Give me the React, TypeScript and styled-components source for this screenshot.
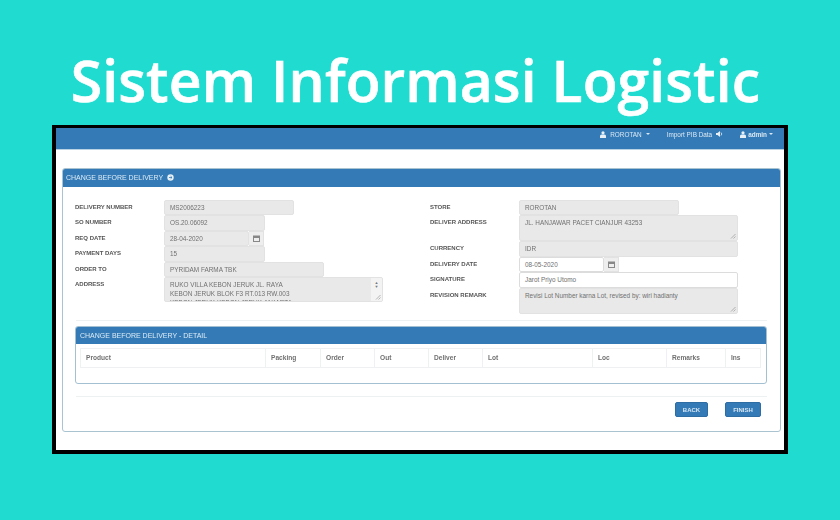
import styled, { createGlobalStyle } from "styled-components";

const Global = createGlobalStyle`
  html, body { margin: 0; padding: 0; }
  body { width: 840px; height: 520px; overflow: hidden; background: #20dcd0; font-family: "Liberation Sans", Arial, sans-serif; }
`;

const Page = styled.div`
  width: 840px;
  height: 520px;
  box-sizing: border-box;
  padding-top: 46px;
  display: flex;
  flex-direction: column;
  align-items: center;
  background: #20dcd0;
`;

const Heading = styled.h1`
  margin: 0 9px 11px 0;
  height: 68px;
  line-height: 68px;
  font-family: "Open Sans", sans-serif;
  font-size: 57px;
  font-weight: 600;
  letter-spacing: 0.1px;
  -webkit-text-stroke: 0.6px #fff;
  color: #fff;
  white-space: nowrap;
`;

const Frame = styled.div`
  width: 736px;
  height: 329px;
  box-sizing: border-box;
  border: 4px solid #000;
  border-top-width: 3px;
  background: #fff;
  overflow: hidden;
`;

const Shot = styled.div`
  height: 100%;
  filter: blur(0.5px);
`;

const NavBar = styled.div`
  height: 22px;
  background: #337ab7;
  border-bottom: 1px solid #b9d3e4;
  box-sizing: border-box;
  display: flex;
  justify-content: flex-end;
  align-items: center;
  padding: 0 11px 9px 0;
  font-size: 6.4px;
  color: #dbe8f2;
`;

const NavItem = styled.span<{ $bold?: boolean; $gap?: number }>`
  display: flex;
  align-items: center;
  gap: ${p => (p.$bold ? 2 : 4)}px;
  margin-left: ${p => p.$gap ?? 18}px;
  font-weight: ${p => (p.$bold ? 700 : 400)};
`;

const Caret = styled.i`
  width: 0;
  height: 0;
  border: 2px solid transparent;
  border-top-color: #dbe8f2;
  border-bottom-width: 0;
`;

const Panel = styled.section`
  margin: 18px 3px 0 6px;
  height: 264px;
  box-sizing: border-box;
  border: 1px solid #a9c4d0;
  border-radius: 3px;
  background: #fff;
`;

const PanelHead = styled.div<{ $h: number; $pad: number }>`
  height: ${p => p.$h}px;
  box-sizing: border-box;
  background: #337ab7;
  border-radius: 2px 2px 0 0;
  display: flex;
  align-items: center;
  gap: 4px;
  padding: 0 0 1px ${p => p.$pad}px;
  font-size: 7px;
  color: #dcebf5;
  white-space: nowrap;
`;

const FormArea = styled.div`
  display: flex;
  padding: 13px 0 0 12px;
  height: 133px;
  box-sizing: border-box;
`;

const Column = styled.div<{ $w: number }>`
  width: ${p => p.$w}px;
  display: flex;
  flex-direction: column;
`;

const Row = styled.div<{ $h?: number }>`
  display: flex;
  flex: none;
  height: ${p => p.$h ?? 15.4}px;
`;

const Label = styled.div`
  width: 89px;
  flex: none;
  font-size: 6px;
  font-weight: 700;
  color: #555;
  line-height: 15px;
  white-space: nowrap;
`;

const Field = styled.div<{ $w: number; $white?: boolean; $tall?: boolean }>`
  position: relative;
  width: ${p => p.$w}px;
  height: 100%;
  box-sizing: border-box;
  padding: ${p => (p.$tall ? "2px" : "0")} 5px 0;
  background: ${p => (p.$white ? "#fff" : "#e9e9e9")};
  border: 1px solid ${p => (p.$white ? "#dcdcdc" : "#e2e2e2")};
  border-radius: 2px;
  font-size: 6.4px;
  line-height: ${p => (p.$tall ? "9px" : "13px")};
  color: #707070;
  overflow: hidden;
  white-space: nowrap;
`;

const Addon = styled.div`
  width: 15px;
  height: 100%;
  box-sizing: border-box;
  background: #eee;
  border: 1px solid #e2e2e2;
  border-left: none;
  display: flex;
  align-items: center;
  justify-content: center;
`;

const Grip = styled.svg`
  position: absolute;
  right: 1px;
  bottom: 1px;
`;

const ScrollBar = styled.div`
  position: absolute;
  right: 0;
  top: 0;
  bottom: 0;
  width: 11px;
  background: #f3f3f3;
  display: flex;
  flex-direction: column;
  align-items: center;
  padding-top: 3px;
  box-sizing: border-box;
  font-size: 4px;
  line-height: 4px;
  color: #777;
`;

const Rule = styled.div<{ $top?: number }>`
  height: 1px;
  background: #eef1f2;
  margin: ${p => p.$top ?? 0}px 13px 0;
`;

const Detail = styled.div`
  margin: 5px 13px 0 12px;
  height: 58px;
  box-sizing: border-box;
  border: 1px solid #a3c0d2;
  border-radius: 3px;
`;

const Table = styled.div`
  display: grid;
  grid-template-columns: 184px 55px 54px 54px 54px 110px 74px 59px 37px;
  margin: 4px 5px 0 4px;
  height: 20px;
  border: 1px solid #eef0f1;
  box-sizing: border-box;
`;

const Cell = styled.div`
  border-left: 1px solid #eef0f1;
  padding-left: 5px;
  font-size: 6.6px;
  font-weight: 700;
  line-height: 18px;
  color: #707070;
  &:first-child { border-left: none; }
`;

const Actions = styled.div`
  display: flex;
  justify-content: flex-end;
  gap: 17px;
  margin: 5px 19px 0 0;
`;

const Btn = styled.button<{ $w: number }>`
  width: ${p => p.$w}px;
  height: 15px;
  padding: 0;
  border: 1px solid #2e6da4;
  border-radius: 2px;
  background: #337ab7;
  color: #d8e7f2;
  font: 700 6px "Liberation Sans", Arial, sans-serif;
`;

function Calendar() {
  return (
    <svg width="7" height="7" viewBox="0 0 7 7">
      <rect x="0.5" y="1" width="6" height="5.5" fill="#eee" stroke="#888" />
      <rect x="0.5" y="1" width="6" height="2" fill="#888" />
    </svg>
  );
}

function Resize() {
  return (
    <Grip width="6" height="6" viewBox="0 0 6 6">
      <path d="M1 5.5 5.5 1M3.5 5.5l2-2" stroke="#999" strokeWidth="0.7" />
    </Grip>
  );
}

function User() {
  return (
    <svg width="6" height="7" viewBox="0 0 6 7">
      <circle cx="3" cy="1.8" r="1.6" fill="#e8f0f6" />
      <path d="M0 7V5.2C0 4 1.2 3.6 3 3.6S6 4 6 5.2V7Z" fill="#e8f0f6" />
    </svg>
  );
}

const columns = ["Product", "Packing", "Order", "Out", "Deliver", "Lot", "Loc", "Remarks", "Ins"];

export default function App() {
  return (
    <Page>
      <Global />
      <Heading>Sistem Informasi Logistic</Heading>
      <Frame>
        <Shot>
          <NavBar>
            <NavItem><User />ROROTAN<Caret /></NavItem>
            <NavItem $gap={17}>
              Import PIB Data
              <svg width="7" height="6" viewBox="0 0 7 6">
                <path d="M0 2h1.5L4 0v6L1.5 4H0Z" fill="#e8f0f6" />
                <path d="M5 1.5a2 2 0 0 1 0 3" stroke="#e8f0f6" strokeWidth="0.8" fill="none" />
              </svg>
            </NavItem>
            <NavItem $bold $gap={17}><User />admin<Caret /></NavItem>
          </NavBar>
          <Panel>
            <PanelHead $h={18} $pad={3}>
              CHANGE BEFORE DELIVERY
              <svg width="7" height="7" viewBox="0 0 7 7">
                <circle cx="3.5" cy="3.5" r="3.2" fill="#e8f0f6" />
                <path d="M2 3.5h3M3.6 2.2l1.4 1.3-1.4 1.3" stroke="#337ab7" strokeWidth="0.8" fill="none" />
              </svg>
            </PanelHead>
            <FormArea>
              <Column $w={355}>
                <Row><Label>DELIVERY NUMBER</Label><Field $w={130}>MS2006223</Field></Row>
                <Row><Label>SO NUMBER</Label><Field $w={101}>OS.20.06092</Field></Row>
                <Row>
                  <Label>REQ DATE</Label>
                  <Field $w={85}>28-04-2020</Field>
                  <Addon><Calendar /></Addon>
                </Row>
                <Row><Label>PAYMENT DAYS</Label><Field $w={101}>15</Field></Row>
                <Row><Label>ORDER TO</Label><Field $w={160}>PYRIDAM FARMA TBK</Field></Row>
                <Row $h={25}>
                  <Label>ADDRESS</Label>
                  <Field $w={219} $tall>
                    RUKO VILLA KEBON JERUK JL. RAYA<br />
                    KEBON JERUK BLOK F3 RT.013 RW.003<br />
                    KEBON JERUK KEBON JERUK JAKARTA
                    <ScrollBar>▲<br />▼</ScrollBar>
                    <Resize />
                  </Field>
                </Row>
              </Column>
              <Column $w={340}>
                <Row><Label>STORE</Label><Field $w={160}>ROROTAN</Field></Row>
                <Row $h={26}>
                  <Label>DELIVER ADDRESS</Label>
                  <Field $w={219} $tall>JL. HANJAWAR PACET CIANJUR 43253<Resize /></Field>
                </Row>
                <Row><Label>CURRENCY</Label><Field $w={219}>IDR</Field></Row>
                <Row>
                  <Label>DELIVERY DATE</Label>
                  <Field $w={85} $white>08-05-2020</Field>
                  <Addon><Calendar /></Addon>
                </Row>
                <Row><Label>SIGNATURE</Label><Field $w={219} $white>Jarot Priyo Utomo</Field></Row>
                <Row $h={26}>
                  <Label>REVISION REMARK</Label>
                  <Field $w={219} $tall>Revisi Lot Number karna Lot, revised by: wiri hadianty<Resize /></Field>
                </Row>
              </Column>
            </FormArea>
            <Rule />
            <Detail>
              <PanelHead $h={17} $pad={4}>CHANGE BEFORE DELIVERY - DETAIL</PanelHead>
              <Table>
                {columns.map(c => (
                  <Cell key={c}>{c}</Cell>
                ))}
              </Table>
            </Detail>
            <Rule $top={12} />
            <Actions>
              <Btn $w={33}>BACK</Btn>
              <Btn $w={36}>FINISH</Btn>
            </Actions>
          </Panel>
        </Shot>
      </Frame>
    </Page>
  );
}
